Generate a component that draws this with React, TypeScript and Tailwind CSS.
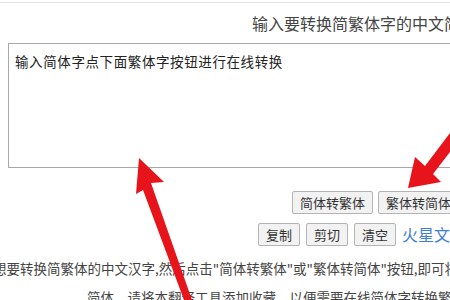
const font = { fontFamily: '"Noto Sans CJK SC", "Noto Sans", sans-serif' };

function Btn({ label }: { label: string }) {
  return (
    <button className="h-[23px] px-[7px] border border-[#b4b4b4] bg-[#f2f2f2] rounded-[2px] text-[13px] leading-none text-[#333] whitespace-nowrap shrink-0">
      {label}
    </button>
  );
}

export default function App() {
  return (
    <div className="relative w-[450px] h-[300px] overflow-hidden bg-white text-[#333]" style={font}>
      <div className="mt-[2px] border-t border-[#e6e6e6]" />

      {/* title */}
      <div className="h-[40px] flex items-center pl-[252px] whitespace-nowrap text-[16px] text-[#444]">
        输入要转换简繁体字的中文简繁体
      </div>

      {/* input box */}
      <div className="ml-[8px] w-[470px] h-[125px] border border-[#a8a8a8] px-[6px] pt-[9px] text-[13.5px] leading-[16px] tracking-[0.6px] text-[#222] whitespace-nowrap">
        输入简体字点下面繁体字按钮进行在线转换
      </div>

      {/* convert buttons */}
      <div className="mt-[23px] flex gap-[5px] pl-[292px]">
        <Btn label="简体转繁体" />
        <Btn label="繁体转简体" />
      </div>

      {/* tools */}
      <div className="mt-[8px] flex items-center gap-[6px] pl-[258px]">
        <Btn label="复制" />
        <Btn label="剪切" />
        <Btn label="清空" />
        <a href="#" className="text-[16px] text-[#3f7fd1] whitespace-nowrap">火星文转换器</a>
      </div>

      {/* help text */}
      <div className="mt-[8px] text-[13.5px] leading-[29px] text-[#444] whitespace-nowrap">
        <div className="-ml-[7px]">想要转换简繁体的中文汉字,然后点击"简体转繁体"或"繁体转简体"按钮,即可将简体转换成繁体</div>
        <div className="pl-[87px]">简体，请将本翻译工具添加收藏，以便需要在线简体字转换繁体</div>
      </div>

      {/* red arrows */}
      <svg className="absolute inset-0 pointer-events-none" width="450" height="300" viewBox="0 0 450 300">
        <polygon points="139,158 164,182 151,183 192,300 184,300 143,190 136,194" fill="#e8141c" />
        <polygon points="408,188 415,157 425,166 450,133 450,152 433,174 441,182" fill="#e8141c" />
      </svg>
    </div>
  );
}
